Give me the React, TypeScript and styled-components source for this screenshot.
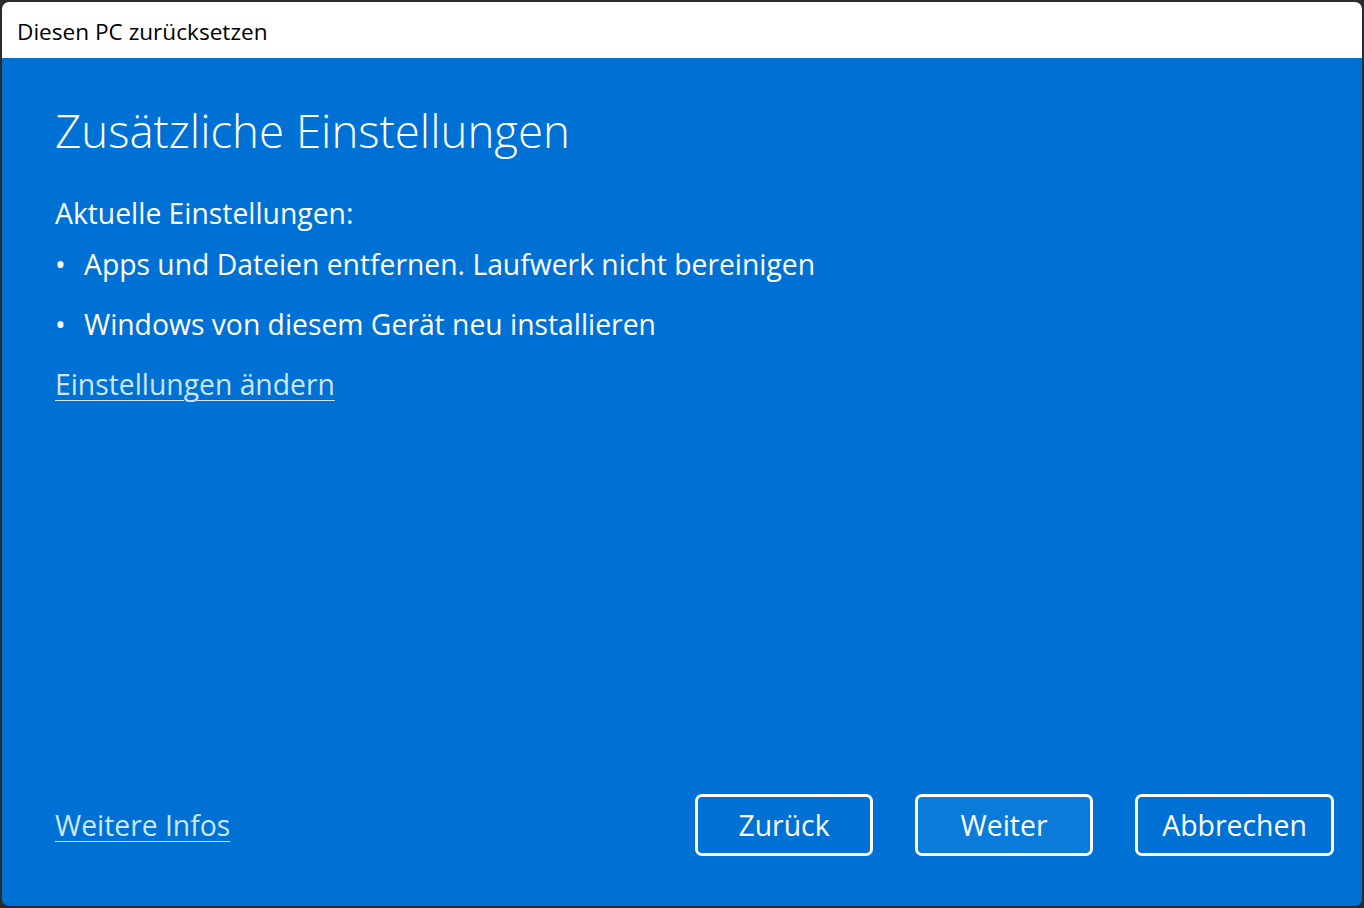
import styled, { createGlobalStyle } from "styled-components";

const Global = createGlobalStyle`
  html, body {
    margin: 0;
    padding: 0;
    background: #2b2b2b;
  }
  * {
    box-sizing: border-box;
  }
`;

const Window = styled.div`
  width: 1364px;
  height: 908px;
  border: 2px solid #2b2b2b;
  border-radius: 9px;
  overflow: hidden;
  display: flex;
  flex-direction: column;
  font-family: "Open Sans", "Noto Sans", sans-serif;
`;

const TitleBar = styled.div`
  height: 56px;
  flex-shrink: 0;
  background: #ffffff;
  display: flex;
  align-items: center;
  padding-left: 15px;
  padding-top: 2px;
  font-size: 22.6px;
  color: #000;
`;

const Body = styled.div`
  flex: 1;
  background: #0071d4;
  color: #fff;
  display: flex;
  flex-direction: column;
  padding: 42px 28px 50px 53px;
`;

const Heading = styled.h1`
  margin: 0 0 36px;
  font-size: 45.6px;
  font-weight: 300;
  line-height: 60px;
`;

const Label = styled.div`
  font-size: 28.3px;
  line-height: 34px;
  margin-bottom: 17px;
`;

const Bullets = styled.ul`
  list-style: none;
  margin: 0;
  padding: 0;
  display: flex;
  flex-direction: column;
  gap: 26px;
`;

const Bullet = styled.li`
  font-size: 28.3px;
  line-height: 34px;
  display: flex;
  gap: 15px;
  &::before {
    content: "•";
    width: 14px;
  }
`;

const Link = styled.a`
  color: #cde6fb;
  text-decoration: underline;
  text-underline-offset: 5px;
  text-decoration-thickness: 1px;
  font-size: 28.3px;
  line-height: 34px;
  cursor: pointer;
`;

const ChangeLink = styled(Link)`
  margin-top: 26px;
  align-self: flex-start;
`;

const Spacer = styled.div`
  flex: 1;
`;

const Footer = styled.div`
  display: flex;
  align-items: center;
`;

const Buttons = styled.div`
  margin-left: auto;
  display: flex;
  gap: 42px;
`;

const Button = styled.button<{ $primary?: boolean; $w: number }>`
  width: ${(p) => p.$w}px;
  height: 62px;
  border: 3px solid #ffffff;
  border-radius: 7px;
  background: ${(p) => (p.$primary ? "#0a7bd8" : "transparent")};
  color: #fff;
  font-family: inherit;
  font-size: 28.4px;
  padding: 0;
  cursor: pointer;
`;

export default function App() {
  return (
    <>
      <Global />
      <Window>
        <TitleBar>Diesen PC zurücksetzen</TitleBar>
        <Body>
          <Heading>Zusätzliche Einstellungen</Heading>
          <Label>Aktuelle Einstellungen:</Label>
          <Bullets>
            <Bullet>Apps und Dateien entfernen. Laufwerk nicht bereinigen</Bullet>
            <Bullet>Windows von diesem Gerät neu installieren</Bullet>
          </Bullets>
          <ChangeLink>Einstellungen ändern</ChangeLink>
          <Spacer />
          <Footer>
            <Link>Weitere Infos</Link>
            <Buttons>
              <Button $w={178}>Zurück</Button>
              <Button $w={178} $primary>
                Weiter
              </Button>
              <Button $w={199}>Abbrechen</Button>
            </Buttons>
          </Footer>
        </Body>
      </Window>
    </>
  );
}
